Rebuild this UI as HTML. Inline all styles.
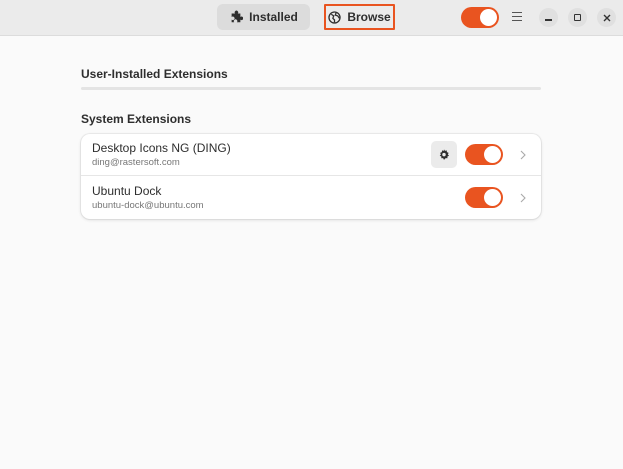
<!DOCTYPE html>
<html><head><meta charset="utf-8"><style>
*{margin:0;padding:0;box-sizing:border-box}
body{width:623px;height:469px;background:#fafafa;font-family:"Liberation Sans",sans-serif;color:#2e2e2e;position:relative;overflow:hidden}
.hdr{position:absolute;left:0;top:0;width:623px;height:36px;background:#ebebeb;border-bottom:1px solid #dcdcdc}
.btn{position:absolute;top:4px;height:26px;border-radius:6px;font-weight:bold;font-size:12px;display:flex;align-items:center;gap:6px;justify-content:center}
.tog{position:absolute;width:38px;height:21px;border-radius:11px;background:#e95420}
.tog::after{content:"";position:absolute;right:2px;top:2px;width:17px;height:17px;border-radius:50%;background:#fff}
.wb{position:absolute;top:8px;width:19px;height:19px;border-radius:50%;background:#e0e0e0;display:flex;align-items:center;justify-content:center}
.t{position:absolute;left:81px;font-weight:bold;font-size:12px;color:#2e2e2e}
.card{position:absolute;left:81px;top:134px;width:460px;height:85px;background:#fff;border-radius:9px;box-shadow:0 0 0 1px rgba(0,0,0,.05),0 1px 3px rgba(0,0,0,.12)}
.row{position:absolute;left:0;width:460px;height:42px}
.n{position:absolute;left:11px;top:7px;font-size:12px;color:#2e2e2e}
.e{position:absolute;left:11px;top:23px;font-size:9.5px;color:#777}
.chev{position:absolute;left:438px;top:15px}
</style></head><body>
<div class="hdr">
<div class="btn" style="left:217px;width:93px;background:#dcdcdc">
<svg width="14" height="14" viewBox="0 0 16 16"><path d="M3 4h4a2 2 0 1 1 3 0h3v4a2 2 0 1 1 0 3v3H9a2 2 0 1 0-3 0H3v-3a2 2 0 1 0 0-3z" fill="#2e2e2e"/></svg>Installed</div>
<div class="btn" style="left:324px;width:71px;border:2px solid #e95420;border-radius:1px">
<svg width="13" height="13" viewBox="0 0 16 16"><circle cx="8" cy="8" r="6.8" fill="none" stroke="#2e2e2e" stroke-width="1.6"/><path d="M4 4l3 2-1 3 2 2v3M10 2l-1 3 3 1 2 3" fill="none" stroke="#2e2e2e" stroke-width="1.6"/></svg>Browse</div>
<div class="tog" style="left:461px;top:7px"></div>
<div style="position:absolute;left:512px;top:12px;width:10px">
<div style="height:1px;background:#555;margin-bottom:3px"></div><div style="height:1px;background:#555;margin-bottom:3px"></div><div style="height:1px;background:#555"></div></div>
<div class="wb" style="left:539px"><div style="width:7px;height:1.5px;background:#333;margin-top:5px"></div></div>
<div class="wb" style="left:568px"><div style="width:7px;height:7px;border:1.3px solid #333;border-radius:1px"></div></div>
<div class="wb" style="left:597px"><svg width="8" height="8"><path d="M1 1L7 7M7 1L1 7" stroke="#333" stroke-width="1.4"/></svg></div>
</div>
<div class="t" style="top:67px">User-Installed Extensions</div>
<div style="position:absolute;left:81px;top:87px;width:460px;height:3px;background:#e4e4e4;border-radius:2px"></div>
<div class="t" style="top:112px">System Extensions</div>
<div class="card">
<div class="row" style="top:0;border-bottom:1px solid #e6e6e6">
<div class="n">Desktop Icons NG (DING)</div><div class="e">ding@rastersoft.com</div>
<div style="position:absolute;left:350px;top:7px;width:26px;height:27px;border-radius:5px;background:#ebebeb;display:flex;align-items:center;justify-content:center">
<svg width="12" height="12" viewBox="0 0 16 16"><path d="M8 0.5l1.3 2 2.3-.7.3 2.4 2.3.9-1.1 2.1 1.6 1.8-2.2 1 .1 2.4-2.4-.3L8 14.5 6.8 12.1l-2.4.3.1-2.4-2.2-1 1.6-1.8L2.8 5.1l2.3-.9.3-2.4 2.3.7z" fill="#2e2e2e"/><circle cx="8" cy="7.5" r="2.3" fill="#ebebeb"/></svg></div>
<div class="tog" style="left:384px;top:10px"></div>
<svg class="chev" width="8" height="12"><path d="M2 2l4 4-4 4" fill="none" stroke="#aaa" stroke-width="1.1"/></svg>
</div>
<div class="row" style="top:43px">
<div class="n">Ubuntu Dock</div><div class="e">ubuntu-dock@ubuntu.com</div>
<div class="tog" style="left:384px;top:10px"></div>
<svg class="chev" width="8" height="12"><path d="M2 2l4 4-4 4" fill="none" stroke="#aaa" stroke-width="1.1"/></svg>
</div>
</div>
</body></html>
